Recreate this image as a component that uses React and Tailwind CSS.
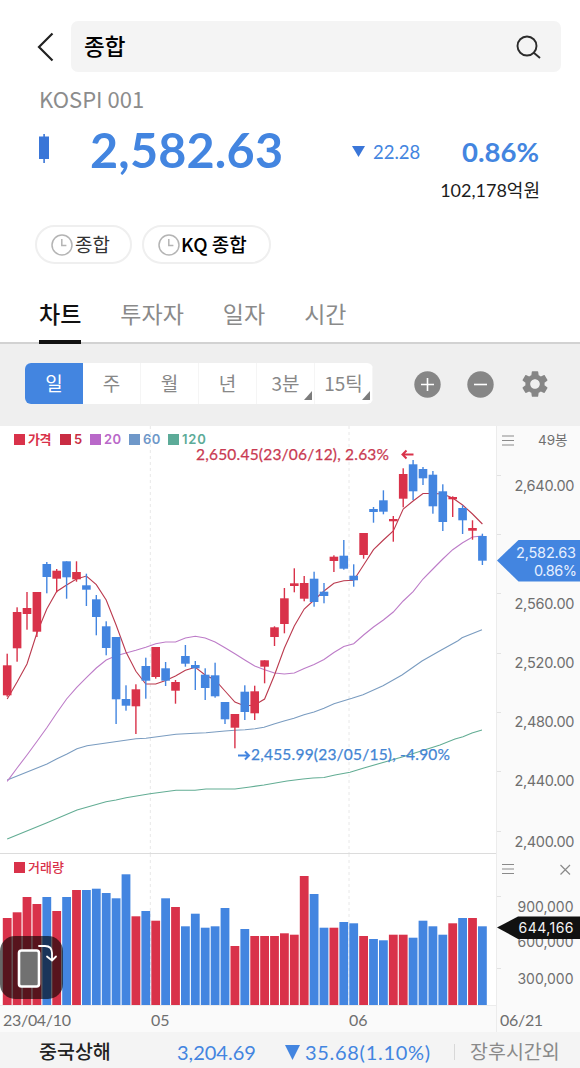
import React, { useState } from 'react';

const RED = '#d9324a';
const BLUE = '#4385e0';

const STEP = 9.9;
const FIRST_X = 7.2;
const barX = (i) => FIRST_X + i * STEP;

// [direction, high, bodyTop, bodyBottom, low, volumeTop]
const candles = [
  ['u', 653.7, 665.3, 695.3, 696.7, 918],
  ['u', 607.3, 612, 648.3, 661.7, 912.3],
  ['u', 592, 608, 614, 629.7, 897],
  ['u', 592, 592, 631.7, 637, 904],
  ['d', 562, 564, 577, 593.3, 897],
  ['u', 569, 570.7, 578.7, 592.3, 911],
  ['d', 561.3, 561.3, 577.3, 598.7, 897],
  ['u', 561.3, 572, 579.3, 581.7, 890],
  ['d', 573.7, 585.3, 589.7, 606, 890],
  ['d', 595, 599.3, 617, 635.3, 888.7],
  ['d', 621.3, 626.3, 648, 655.3, 893],
  ['d', 637, 637, 699.3, 724, 898.3],
  ['d', 685.3, 699, 705.7, 710.7, 874.3],
  ['u', 684.3, 689.3, 706.3, 734, 916.3],
  ['d', 657.7, 666, 680.7, 698.7, 911],
  ['u', 647, 647, 677, 678.7, 920.7],
  ['d', 662, 668.3, 680.7, 686, 898.3],
  ['u', 680, 682, 690.7, 703.7, 907],
  ['d', 645, 656, 663.7, 666.7, 926.3],
  ['d', 661, 665, 668.3, 690, 913.7],
  ['d', 668.3, 674.7, 688, 700, 927.7],
  ['d', 662.7, 675.3, 696.3, 697.7, 926.3],
  ['d', 702, 702, 719.3, 724, 908],
  ['u', 714, 714, 727.7, 748.3, 946],
  ['d', 685.3, 691.7, 712, 720, 929],
  ['u', 685.7, 691.3, 713.3, 720, 936],
  ['u', 660.3, 660.3, 666.7, 683.3, 936],
  ['u', 626.3, 627.3, 637, 646, 936],
  ['u', 588, 598.3, 624, 633.3, 933.3],
  ['u', 568.3, 583.3, 586, 592.3, 934.7],
  ['u', 576, 583, 598.7, 601.3, 876],
  ['d', 571.7, 578.7, 602, 606.7, 894],
  ['d', 583, 591.7, 596, 603.3, 927.7],
  ['u', 555.3, 556.7, 561, 572, 927.7],
  ['d', 540, 555.7, 568.7, 569.7, 922],
  ['d', 564.3, 575.7, 580.3, 586.7, 923.3],
  ['u', 533, 533, 555, 558.7, 936],
  ['d', 507, 509, 512, 522.7, 939],
  ['d', 490.3, 500.3, 511.7, 514.3, 940.3],
  ['u', 516, 519, 521.3, 541.7, 934.7],
  ['u', 468.3, 474, 498.7, 507.3, 934.7],
  ['d', 460, 464.3, 491.3, 500, 937.7],
  ['d', 467, 469, 478.3, 485, 920.7],
  ['d', 471, 474.7, 506.3, 513.7, 926.3],
  ['d', 484.3, 491.3, 522, 531, 934.7],
  ['u', 496.3, 497, 499.3, 517, 923.3],
  ['d', 505.3, 508, 520.3, 534, 918],
  ['u', 520.3, 528, 530.7, 539.7, 918],
  ['d', 533.7, 536, 560.7, 565, 926.3],
];

const ma5 = [
  699, 682, 664, 633, 609, 591.5, 585, 579, 576, 584.7, 600, 625, 652, 671.3, 684, 684, 680.5,
  676, 670.3, 667.3, 675, 680, 691, 702, 706, 705, 699, 675, 648, 626, 609, 600, 591, 583.3,
  580.7, 580.3, 565, 549.7, 540, 531, 509, 501, 493.5, 493.5, 494, 498, 505, 514, 524,
];

const ma20 = [
  781.3, 768, 755, 741.5, 727.7, 713, 699, 687.7, 677.7, 668, 660, 655.7, 653, 650.3, 647.3,
  643.7, 642, 642, 638, 636.3, 638, 642, 647.7, 653.7, 660, 666, 669.7, 673, 674, 673, 668.5,
  664.5, 659.5, 652.5, 646.5, 643.7, 635, 627, 620, 612, 601, 591.7, 579, 569, 559, 549.7,
  542.7, 537, 536,
];

const ma60 =
  '7.2,780 47,764 57,758.7 67,754 77,748.7 87,745.7 136,738.7 146,738.3 176,734.3 195,733.3 206,732.7 225,731 235,730.3 245,729.7 255,728.8 264,727.3 274,724 284,721 294,718.3 304,714.7 314,712 324,708.3 334,703.7 343,701 352,698.3 363,694.7 383,685.7 402,675 422,661 440,650.7 458,640.7 462,637.7 482,629.7';

const ma120 =
  '7.2,839 47,822.7 77,810 106,801.7 116,800 126,797.7 150,793.7 176,790.3 195,790.3 206,789 235,789 250,787 264,785 287,781 303,779 313,778 324,777.5 335,775 350,772.2 363,768.3 403,756.7 440,745 455,739 463,736.7 472,733 482,730';

const toPoints = (values) => values.map((y, i) => `${barX(i)},${y}`).join(' ');

const legend = [
  { label: '가격', box: 'bg-[#d9324a]', text: 'text-[#d9324a] w-[29px] tracking-[-0.5px]' },
  { label: '5', box: 'bg-[#c92c43]', text: 'text-[#c92c43] w-[13px]' },
  { label: '20', box: 'bg-[#b968c9]', text: 'text-[#b968c9] w-[22px]' },
  { label: '60', box: 'bg-[#6f98c9]', text: 'text-[#6f98c9] w-[22px]' },
  { label: '120', box: 'bg-[#5cab98]', text: 'text-[#5cab98] tracking-[0.8px]' },
];

const tabs = ['차트', '투자자', '일자', '시간'];

const periods = [
  { label: '일' },
  { label: '주' },
  { label: '월' },
  { label: '년' },
  { label: '3분', more: true },
  { label: '15틱', more: true },
];

const ClockIcon = () => (
  <svg className="h-[22px] w-[22px] shrink-0" viewBox="0 0 22 22" fill="none" stroke="#b4b4b4" strokeWidth="1.5">
    <circle cx="11" cy="11" r="10" />
    <path d="M10.8 5V11.5h4.6" />
  </svg>
);

const Header = () => (
  <header className="flex items-center pt-[21px] pl-[37px]">
    <svg className="h-[30px] w-[17px]" viewBox="0 0 17 30" fill="none" stroke="#222" strokeWidth="2.2">
      <path d="M15.5 1.5 2 15 15.5 28.5" />
    </svg>
    <div className="ml-[17px] flex h-[51px] w-[490px] items-center justify-between rounded-[7px] bg-[#f4f4f4] pr-5 pl-[13px]">
      <span className="pb-[2px] text-[22.5px] font-medium text-black">종합</span>
      <svg className="h-6 w-[25px]" viewBox="0 0 25 24" fill="none" stroke="#2b2b2b" strokeWidth="1.9">
        <circle cx="11" cy="11" r="9.5" />
        <path d="m17.5 17.5 6.5 5.5" />
      </svg>
    </div>
  </header>
);

const Quote = () => (
  <section className="h-[153px]">
    <div className="h-[51px] pt-[12px] pl-[39px] text-[22px] leading-[28px] text-[#8c8c8c]">KOSPI 001</div>
    <div className="flex h-[50px] items-center pl-[39px] font-['Lato',sans-serif] whitespace-nowrap text-[#4385e0]">
      <svg className="h-[29px] w-[10px]" viewBox="0 0 10 29" fill="#3a76d8">
        <rect x="4.3" width="1.6" height="29" />
        <rect y="2.5" width="10" height="22.5" />
      </svg>
      <span className="mt-[3px] ml-[41px] w-[192px] text-[48.5px] leading-none font-bold tracking-[0.2px]">2,582.63</span>
      <svg className="mt-[6px] ml-[70px] h-[11px] w-[13px]" viewBox="0 0 13 11" fill="#3a76d8">
        <path d="M0 0h13L6.5 11z" />
      </svg>
      <span className="mt-[9px] ml-2 w-[47px] text-[18.5px]">22.28</span>
      <span className="mt-[8px] ml-[42px] text-[27.5px] font-bold">0.86%</span>
    </div>
    <div className="pt-[4px] pr-10 text-right font-['Lato','Noto_Sans_CJK_KR',sans-serif] text-[18px] leading-[27px] text-[#1c1c1c]">
      102,178억원
    </div>
  </section>
);

const Recents = () => (
  <div className="flex h-[39px] gap-[10px] pl-[35px]">
    <div className="flex w-[97px] items-center gap-[2px] rounded-full border-2 border-[#efefef] pl-[14px] text-[19px] text-[#333]">
      <ClockIcon />
      종합
    </div>
    <div className="flex w-[129px] items-center gap-px rounded-full border-2 border-[#efefef] pl-[14px] text-[19px] font-medium whitespace-nowrap text-black">
      <ClockIcon />
      KQ 종합
    </div>
  </div>
);

const Toolbar = ({ period, onSelect }) => (
  <div className="flex h-[82px] items-center bg-[#efefef] pb-[3px] pl-[25px]">
    <div className="flex h-[41px] w-[348px] overflow-hidden rounded-md bg-white">
      {periods.map((p, i) => (
        <button
          key={p.label}
          onClick={() => onSelect(i)}
          className={`relative h-full w-[58px] text-[19px] whitespace-nowrap ${
            i === period ? 'bg-[#4385e0] text-white' : 'border-r border-[#f5f5f5] text-[#888]'
          }`}
        >
          {p.label}
          {p.more && (
            <svg className="absolute right-[2px] bottom-[4px] h-[9px] w-[8px]" viewBox="0 0 8 9" fill="#7c7c7c">
              <path d="M8 0v9H0z" />
            </svg>
          )}
        </button>
      ))}
    </div>
    <svg className="mt-[1px] ml-[41px] h-[27px] w-[27px]" viewBox="0 0 27 27" fill="none">
      <circle cx="13.5" cy="13.5" r="13.2" fill="#868686" />
      <path d="M13.5 7v13M7 13.5h13" stroke="#fff" strokeWidth="1.6" />
    </svg>
    <svg className="mt-[1px] ml-[26px] h-[27px] w-[27px]" viewBox="0 0 27 27" fill="none">
      <circle cx="13.5" cy="13.5" r="13.2" fill="#868686" />
      <path d="M7 13.5h13" stroke="#fff" strokeWidth="1.6" />
    </svg>
    <svg className="mt-[1px] ml-[25px] h-[32px] w-[32px]" viewBox="0 0 24 24" fill="#868686">
      <path d="M19.14 12.94c.04-.3.06-.61.06-.94 0-.32-.02-.64-.07-.94l2.03-1.58c.18-.14.23-.41.12-.61l-1.92-3.32c-.12-.22-.37-.29-.59-.22l-2.39.96c-.5-.38-1.03-.7-1.62-.94l-.36-2.54c-.04-.24-.24-.41-.48-.41h-3.84c-.24 0-.43.17-.47.41l-.36 2.54c-.59.24-1.13.57-1.62.94l-2.39-.96c-.22-.08-.47 0-.59.22L2.74 8.87c-.12.21-.08.47.12.61l2.03 1.58c-.05.3-.09.63-.09.94s.02.64.07.94l-2.03 1.58c-.18.14-.23.41-.12.61l1.92 3.32c.12.22.37.29.59.22l2.39-.96c.5.38 1.03.7 1.62.94l.36 2.54c.05.24.24.41.48.41h3.84c.24 0 .44-.17.47-.41l.36-2.54c.59-.24 1.13-.56 1.62-.94l2.39.96c.22.08.47 0 .59-.22l1.92-3.32c.12-.22.07-.47-.12-.61l-2.01-1.58zM12 15.6c-1.98 0-3.6-1.62-3.6-3.6s1.62-3.6 3.6-3.6 3.6 1.62 3.6 3.6-1.62 3.6-3.6 3.6z" />
    </svg>
  </div>
);

const PriceChart = () => (
  <div className="relative h-[428px] w-[496px] border-b border-[#dcdcdc]">
    <svg className="block h-[427px] w-[496px] font-['Lato',sans-serif]" viewBox="0 426 496 427">
      <path d="M150.3 426V853M349 426V853" stroke="#e8e8e8" strokeDasharray="3 3" />
      <g fill="none" strokeWidth="1.1">
        <polyline points={ma120} stroke="#63ad94" />
        <polyline points={ma60} stroke="#7a9cc0" />
        <polyline points={toPoints(ma20)} stroke="#bd7cc8" />
        <polyline points={toPoints(ma5)} stroke="#bb3a4e" />
      </g>
      {candles.map(([dir, high, top, bottom, low], i) => {
        const color = dir === 'u' ? RED : BLUE;
        return (
          <g key={i} fill={color}>
            <rect x={barX(i) - 0.7} y={high} width="1.4" height={low - high} />
            <rect x={barX(i) - 4.3} y={top} width="8.6" height={bottom - top} />
          </g>
        );
      })}
      <text x="196" y="460" textLength="193" fontSize="15.5" fill="#c93a52" stroke="#c93a52" strokeWidth="0.25">
        2,650.45(23/06/12), 2.63%
      </text>
      <path d="M413.5 454.5H403M406.5 450.5l-4 4 4 4" fill="none" stroke={RED} strokeWidth="2" />
      <path d="M238 755.5h10.5M245 751.5l4 4-4 4" fill="none" stroke={BLUE} strokeWidth="2" />
      <text x="251" y="760" textLength="199" fontSize="15.5" fill="#4385d3" stroke="#4385d3" strokeWidth="0.25">
        2,455.99(23/05/15), -4.90%
      </text>
    </svg>
    <div className="absolute top-[4px] left-[14px] flex items-center font-['Inter','Noto_Sans_CJK_KR',sans-serif] text-[13px] leading-[18px] font-semibold tracking-[0.5px]">
      {legend.map((item) => (
        <React.Fragment key={item.label}>
          <span className={`mr-[3px] h-[11px] w-[11px] ${item.box}`} />
          <span className={`mr-[3px] whitespace-nowrap ${item.text}`}>{item.label}</span>
        </React.Fragment>
      ))}
    </div>
  </div>
);

const priceTicks = [475, 534, 593, 653, 712, 771, 831];
const priceLabels = [
  ['2,640.00', 490.7],
  ['2,560.00', 608.5],
  ['2,520.00', 668.3],
  ['2,480.00', 727.3],
  ['2,440.00', 786.4],
  ['2,400.00', 846.5],
];

const PriceAxis = () => (
  <svg
    className="block h-[428px] w-[84px] border-l border-[#ececec] bg-[#fafafa] font-['Inter','Noto_Sans_CJK_KR',sans-serif]"
    viewBox="497 426 83 428"
    fontSize="14.5"
    fill="#6f6f6f"
  >
    <path d="M502 436h12M502 440.5h12M502 445h12" stroke="#8a8a8a" strokeWidth="1.2" />
    <text x="538" y="445" fontSize="13.5">49봉</text>
    {priceTicks.map((y) => (
      <rect key={y} x="497" y={y} width="4" height="1" fill="#e2e2e2" />
    ))}
    {priceLabels.map(([label, y]) => (
      <text key={label} x="514.5" y={y} textLength="60">{label}</text>
    ))}
    <path d="M497 560.5 518.5 540H580v41.5H518.5z" fill={BLUE} />
    <text x="516" y="557.7" textLength="60" fill="#e6efff">2,582.63</text>
    <text x="534" y="576" textLength="43" fill="#e6efff">0.86%</text>
  </svg>
);

const VolumeChart = () => (
  <div className="relative h-[152px] w-[496px] border-b border-[#ececec]">
    <svg className="block h-[151px] w-[496px]" viewBox="0 854 496 151">
      <path d="M150.3 854V1005M349 854V1005" stroke="#e8e8e8" strokeDasharray="3 3" />
      {candles.map((c, i) => (
        <rect key={i} x={barX(i) - 4.4} y={c[5]} width="8.8" height={1005 - c[5]} fill={c[0] === 'u' ? RED : BLUE} />
      ))}
    </svg>
    <div className="absolute top-[4px] left-[14px] flex items-center gap-[3px] text-[13px] leading-[18px] font-medium text-[#d9324a]">
      <span className="h-[11px] w-[11px] bg-[#d9324a]" />
      거래량
    </div>
    {/* rotate screen button */}
    <div className="absolute top-[82px] left-0 h-[63px] w-[63px] rounded-[15px] bg-black/60">
      <svg className="h-full w-full" viewBox="0 0 63 63" fill="none" stroke="#fff" strokeLinecap="round" strokeLinejoin="round">
        <rect x="19" y="14.5" width="20" height="36" rx="2.5" fill="#717171" strokeWidth="2.6" />
        <path d="M39 10h6c4.5 0 7 2.5 7 7v7M47 20.5l5 4 4-4" strokeWidth="1.8" />
      </svg>
    </div>
  </div>
);

const VolumeAxis = () => (
  <svg
    className="block h-[152px] w-[84px] border-l border-[#ececec] bg-[#fafafa] font-['Inter',sans-serif]"
    viewBox="497 854 83 152"
    fontSize="14"
    fill="#6f6f6f"
  >
    <path d="M502 864.5h12M502 869h12M502 873.5h12" stroke="#8a8a8a" strokeWidth="1.2" />
    <path d="m560.5 865 9.5 9.5M570 865l-9.5 9.5" stroke="#8a8a8a" strokeWidth="1.2" />
    <rect x="497" y="896" width="4" height="1" fill="#e2e2e2" />
    <rect x="497" y="968" width="4" height="1" fill="#e2e2e2" />
    <text x="517.5" y="912.3" textLength="56">900,000</text>
    <text x="517.5" y="947.3" textLength="56">600,000</text>
    <text x="517.5" y="983.5" textLength="56">300,000</text>
    <path d="M497 927.5 518 916.5H580V939H518z" fill="#111" />
    <text x="518.5" y="933" textLength="55" fill="#f4f4f4">644,166</text>
  </svg>
);

const App = () => {
  const [tab, setTab] = useState(0);
  const [period, setPeriod] = useState(0);

  return (
    <div className="h-[1068px] w-[580px] overflow-hidden bg-white font-['Noto_Sans_CJK_KR',sans-serif]">
      <Header />
      <Quote />
      <Recents />

      <nav className="mt-[20px] flex h-[60px] gap-[39px] border-b-2 border-[#d2d2d2] pl-[39px] text-[23px]">
        {tabs.map((name, i) => (
          <button
            key={name}
            onClick={() => setTab(i)}
            className={`-mb-[2px] h-[60px] whitespace-nowrap ${
              i === tab ? 'border-b-4 border-[#111] pt-[2px] font-medium text-[#111]' : 'pb-[2px] text-[#8a8a8a]'
            }`}
          >
            {name}
          </button>
        ))}
      </nav>

      <Toolbar period={period} onSelect={setPeriod} />

      <div className="flex">
        <PriceChart />
        <PriceAxis />
      </div>
      <div className="flex">
        <VolumeChart />
        <VolumeAxis />
      </div>

      <div className="flex h-[26px] items-center bg-[#fafafa] pt-[2px] font-['Lato',sans-serif] text-[16px] tracking-[-0.3px] text-[#6f6f6f]">
        <span className="w-[148px] pl-[3px]">23/04/10</span>
        <span className="w-[198px] pl-[3px] tracking-normal">05</span>
        <span className="w-[150px] pl-[3px] tracking-normal">06</span>
        <span className="-mt-[2px] h-[26px] border-l border-[#ececec] pl-[3px] leading-[28px]">06/21</span>
      </div>

      <footer className="flex h-[36px] items-center bg-[#f4f4f4] pt-[4px] pl-[39px] font-['Lato','Noto_Sans_CJK_KR',sans-serif] text-[20px] whitespace-nowrap text-[#4385e0]">
        <span className="w-[138px] text-[19.5px] font-medium text-[#222]">중국상해</span>
        <span className="w-[108px]">3,204.69</span>
        <svg className="h-[15px] w-[15px]" viewBox="0 0 15 15" fill="#4385e0">
          <path d="M0 0h15L7.5 15z" />
        </svg>
        <span className="ml-[5px] w-[149px] tracking-[0.7px]">35.68(1.10%)</span>
        <span className="h-[16px] w-px bg-[#d8d8d8]" />
        <span className="ml-[15px] text-[19.5px] text-[#8a8a8a]">장후시간외</span>
      </footer>
    </div>
  );
};

export default App;
